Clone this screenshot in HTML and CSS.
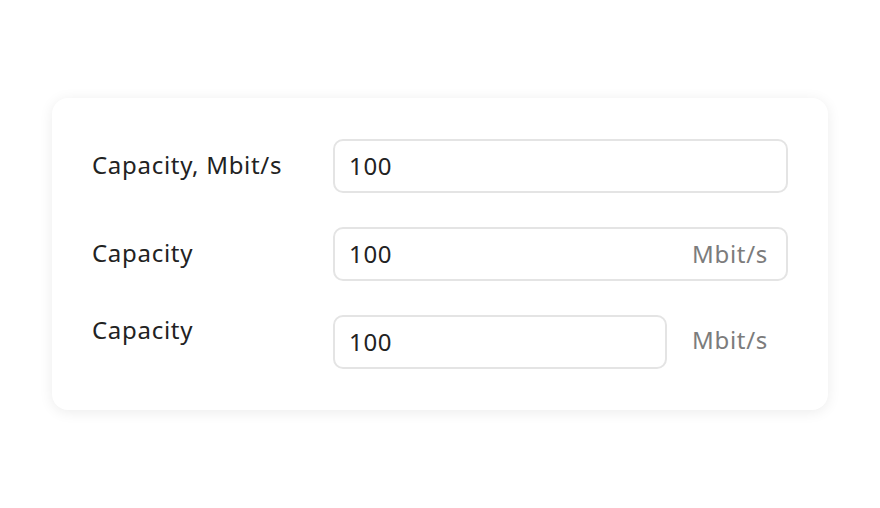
FILE: index.html
```html
<!DOCTYPE html>
<html>
<head>
<meta charset="utf-8">
<link rel="stylesheet" href="styles.css">
</head>
<body>
<div class="card">
  <div class="row">
    <div class="label">Capacity, Mbit/s</div>
    <div class="field"><div class="input"><span class="value">100</span></div></div>
  </div>
  <div class="row">
    <div class="label">Capacity</div>
    <div class="field"><div class="input"><span class="value">100</span><span class="unit">Mbit/s</span></div></div>
  </div>
  <div class="row row-top">
    <div class="label label-top">Capacity</div>
    <div class="field"><div class="input input-short"><span class="value">100</span></div><span class="unit unit-out">Mbit/s</span></div>
  </div>
</div>
</body>
</html>
```
FILE: styles.css
```css
* { box-sizing: border-box; }
body {
  margin: 0;
  background: #ffffff;
  font-family: "Noto Sans", sans-serif;
  width: 880px;
  height: 508px;
  padding: 98px 52px 0 52px;
}
.card {
  width: 776px;
  height: 312px;
  background: #fff;
  border-radius: 16px;
  box-shadow: 0 2px 14px rgba(0,0,0,0.08);
  padding: 41px 40px;
  display: flex;
  flex-direction: column;
  gap: 34px;
}
.row {
  display: flex;
  align-items: center;
}
.row-top { align-items: flex-start; }
.label {
  width: 241px;
  flex: none;
  font-size: 24px;
  letter-spacing: 0.7px;
  line-height: 32px;
  color: #222;
  padding-bottom: 3px;
}
.label-top { padding-top: 0; padding-bottom: 0; margin-top: -1px; }
.field {
  flex: 1;
  display: flex;
  align-items: center;
  gap: 25px;
}
.input {
  flex: 1;
  height: 54px;
  border: 2px solid #e4e4e4;
  border-radius: 10px;
  padding: 0 18px 2px 14px;
  display: flex;
  align-items: center;
  justify-content: space-between;
  font-size: 24px;
  letter-spacing: 0.7px;
  color: #222;
}
.unit {
  color: #7c7c7c;
  font-size: 24px;
  letter-spacing: 0.7px;
}
.unit-out { padding-right: 20px; padding-bottom: 5px; }
```
